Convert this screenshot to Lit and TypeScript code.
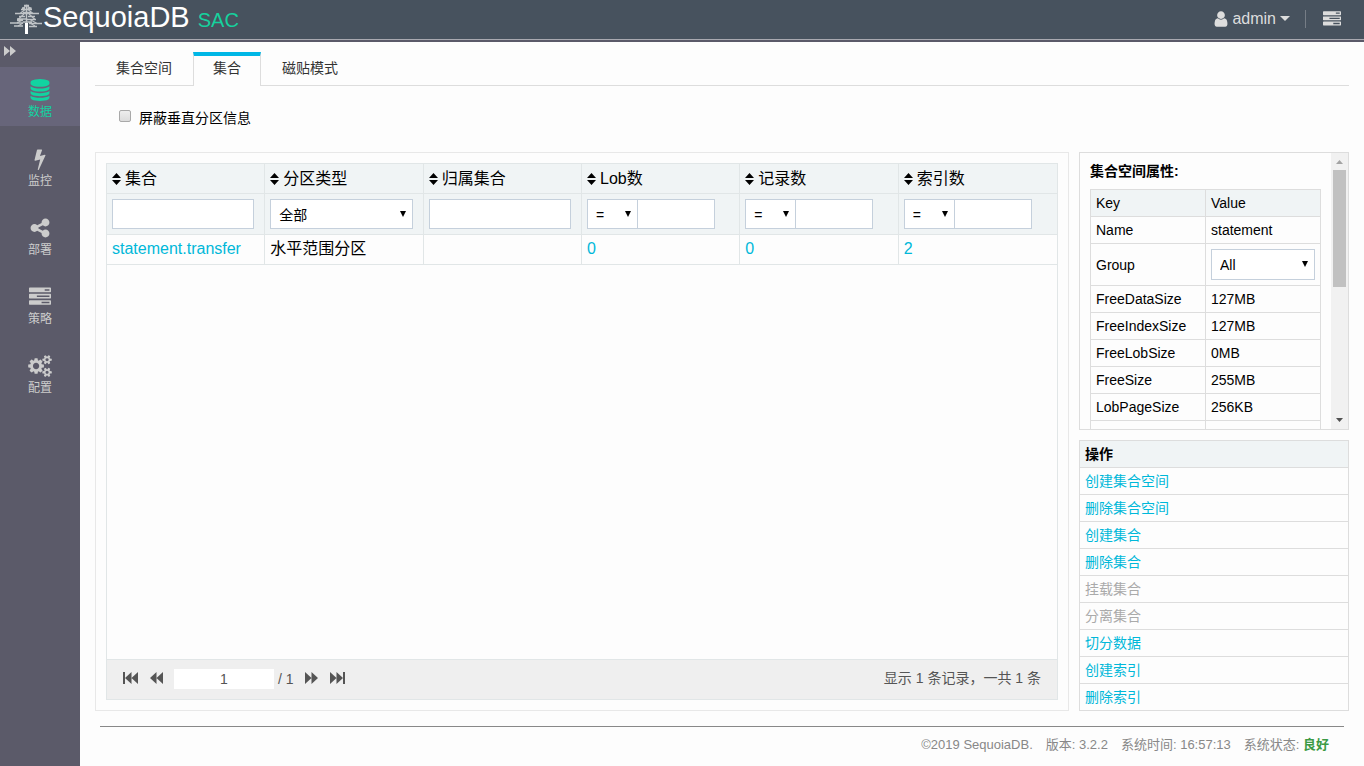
import { LitElement, html, css, svg, nothing } from "lit";
import { customElement, state } from "lit/decorators.js";

const ICONS: Record<string, string> = {
  user: "M1536 1399q0 109-62.5 187t-150.5 78h-854q-88 0-150.5-78t-62.5-187q0-85 8.5-160.5t31.5-152 58.5-131 94-89 134.5-34.5q131 128 313 128t313-128q76 0 134.5 34.5t94 89 58.5 131 31.5 152 8.5 160.5zm-256-887q0 159-112.5 271.5t-271.5 112.5-271.5-112.5-112.5-271.5 112.5-271.5 271.5-112.5 271.5 112.5 112.5 271.5z",
  database: "M896 768q237 0 443-43t325-127v170q0 69-103 128t-280 93.5-385 34.5-385-34.5-280-93.5-103-128v-170q119 84 325 127t443 43zm0 768q237 0 443-43t325-127v170q0 69-103 128t-280 93.5-385 34.5-385-34.5-280-93.5-103-128v-170q119 84 325 127t443 43zm0-384q237 0 443-43t325-127v170q0 69-103 128t-280 93.5-385 34.5-385-34.5-280-93.5-103-128v-170q119 84 325 127t443 43zm0-1152q208 0 385 34.5t280 93.5 103 128v128q0 69-103 128t-280 93.5-385 34.5-385-34.5-280-93.5-103-128v-128q0-69 103-128t280-93.5 385-34.5z",
  bolt: "M1333 566q18 20 7 44l-540 1157q-13 25-42 25-4 0-14-2-17-5-25.5-19t-4.5-30l197-808-406 101q-4 1-12 1-18 0-31-11-18-15-13-39l201-825q4-14 16-23t28-9h328q19 0 32 12.5t13 29.5q0 8-5 18l-171 463 396-98q8-2 12-2 19 0 34 15z",
  share: "M1344 1024q133 0 226.5 93.5t93.5 226.5-93.5 226.5-226.5 93.5-226.5-93.5-93.5-226.5q0-12 2-34l-360-180q-92 86-218 86-133 0-226.5-93.5t-93.5-226.5 93.5-226.5 226.5-93.5q126 0 218 86l360-180q-2-22-2-34 0-133 93.5-226.5t226.5-93.5 226.5 93.5 93.5 226.5-93.5 226.5-226.5 93.5q-126 0-218-86l-360 180q2 22 2 34t-2 34l360 180q92-86 218-86z",
  tasks: "M1024 1408h640v-128h-640v128zm-384-512h1024v-128h-1024v128zm640-512h384v-128h-384v128zm512 832v256q0 26-19 45t-45 19h-1664q-26 0-45-19t-19-45v-256q0-26 19-45t45-19h1664q26 0 45 19t19 45zm0-512v256q0 26-19 45t-45 19h-1664q-26 0-45-19t-19-45v-256q0-26 19-45t45-19h1664q26 0 45 19t19 45zm0-512v256q0 26-19 45t-45 19h-1664q-26 0-45-19t-19-45v-256q0-26 19-45t45-19h1664q26 0 45 19t19 45z",
  cogs: "M832 896q0-106-75-181t-181-75-181 75-75 181 75 181 181 75 181-75 75-181zm768 512q0-52-38-90t-90-38-90 38-38 90q0 53 37.5 90.5t90.5 37.5 90.5-37.5 37.5-90.5zm0-1024q0-52-38-90t-90-38-90 38-38 90q0 53 37.5 90.5t90.5 37.5 90.5-37.5 37.5-90.5zm-384 421v185q0 10-7 19.5t-16 10.5l-155 24q-11 35-32 76 34 48 90 115 7 11 7 20 0 12-7 19-23 30-82.5 89.5t-78.5 59.5q-11 0-21-7l-115-90q-37 19-77 31-11 108-23 155-7 24-30 24h-186q-11 0-20-7.5t-10-17.5l-23-153q-34-10-75-31l-118 89q-7 7-20 7-11 0-21-8-144-133-144-160 0-9 7-19 10-14 41-53t47-61q-23-44-35-82l-152-24q-10-1-17-9.5t-7-19.5v-185q0-10 7-19.5t16-10.5l155-24q11-35 32-76-34-48-90-115-7-11-7-20 0-12 7-20 22-30 82-89t79-59q11 0 21 7l115 90q34-18 77-32 11-108 23-154 7-24 30-24h186q11 0 20 7.5t10 17.5l23 153q34 10 75 31l118-89q8-7 20-7 11 0 21 8 144 133 144 160 0 8-7 19-12 16-42 54t-45 60q23 48 34 82l152 23q10 2 17 10.5t7 19.5zm640 533v140q0 16-149 31-12 27-30 52 51 113 51 138 0 4-4 7-122 71-124 71-8 0-46-47t-52-68q-20 2-30 2t-30-2q-14 21-52 68t-46 47q-2 0-124-71-4-3-4-7 0-25 51-138-18-25-30-52-149-15-149-31v-140q0-16 149-31 13-29 30-52-51-113-51-138 0-4 4-7 4-2 35-20t59-34 30-16q8 0 46 46.5t52 67.5q20-2 30-2t30 2q51-71 92-112l6-2q4 0 124 70 4 3 4 7 0 25-51 138 17 23 30 52 149 15 149 31zm0-1024v140q0 16-149 31-12 27-30 52 51 113 51 138 0 4-4 7-122 71-124 71-8 0-46-47t-52-68q-20 2-30 2t-30-2q-14 21-52 68t-46 47q-2 0-124-71-4-3-4-7 0-25 51-138-18-25-30-52-149-15-149-31v-140q0-16 149-31 13-29 30-52-51-113-51-138 0-4 4-7 4-2 35-20t59-34 30-16q8 0 46 46.5t52 67.5q20-2 30-2t30 2q51-71 92-112l6-2q4 0 124 70 4 3 4 7 0 25-51 138 17 23 30 52 149 15 149 31z",
};

const icon = (name: string, cls: string) =>
  html`<svg class=${cls} viewBox="0 0 1792 1792" aria-hidden="true">${svg`<path d=${ICONS[name]} fill="currentColor"></path>`}</svg>`;

const glyph = (w: number, h: number, d: string, cls = "") =>
  html`<svg class=${cls} width=${w} height=${h} viewBox="0 0 ${w} ${h}" aria-hidden="true">${svg`<path d=${d} fill="currentColor"></path>`}</svg>`;

const sortIcon = () => glyph(9, 12, "M4.5 0 9 5H0zM0 7h9L4.5 12z", "sort");
const downArrow = () => glyph(6, 6, "M0 0h6L3 6z", "arrow");

const NAV = [
  { icon: "database", label: "数据", active: true },
  { icon: "bolt", label: "监控" },
  { icon: "share", label: "部署" },
  { icon: "tasks", label: "策略" },
  { icon: "cogs", label: "配置" },
];

const COLUMNS = [
  { title: "集合", filter: "text" },
  { title: "分区类型", filter: "select" },
  { title: "归属集合", filter: "text" },
  { title: "Lob数", filter: "compare" },
  { title: "记录数", filter: "compare" },
  { title: "索引数", filter: "compare" },
];

const PROPS: { key: string; value?: string; options?: string[] }[] = [
  { key: "Name", value: "statement" },
  { key: "Group", options: ["All"] },
  { key: "FreeDataSize", value: "127MB" },
  { key: "FreeIndexSize", value: "127MB" },
  { key: "FreeLobSize", value: "0MB" },
  { key: "FreeSize", value: "255MB" },
  { key: "LobPageSize", value: "256KB" },
  { key: "", value: "" },
];

const ACTIONS = [
  { label: "创建集合空间" },
  { label: "删除集合空间" },
  { label: "创建集合" },
  { label: "删除集合" },
  { label: "挂载集合", disabled: true },
  { label: "分离集合", disabled: true },
  { label: "切分数据" },
  { label: "创建索引" },
  { label: "删除索引" },
];

@customElement("app-root")
export class AppRoot extends LitElement {
  @state() private page = "1";

  static styles = css`
    :host {
      display: flex;
      flex-direction: column;
      height: 100vh;
      min-height: 600px;
      box-sizing: border-box;
      font: 14px/20px "Liberation Sans", "Noto Sans CJK SC", sans-serif;
      color: #000;
      background: #fdfdfd;
    }
    *, *::before, *::after { box-sizing: border-box; }
    a { color: #00b8d9; text-decoration: none; }
    button, input, select {
      font: inherit;
      color: inherit;
      margin: 0;
      padding: 0;
      border: 0;
      border-radius: 0;
      background: none;
    }
    button { cursor: pointer; }
    svg { display: block; flex: none; }

    .top {
      display: flex;
      align-items: center;
      justify-content: space-between;
      height: 40px;
      padding: 0 23px 0 10px;
      background: #47525e;
      border-bottom: 1px solid #a9a9b0;
      color: #ddd;
      flex: none;
    }
    .brand { display: flex; align-items: baseline; line-height: 34px; padding-bottom: 2px; }
    .tree { align-self: center; margin-right: 1px; }
    .name { font-size: 29px; color: #fff; }
    .product { font-size: 20px; color: #16d19d; margin-left: 8px; }
    .tools { display: flex; align-items: center; font-size: 16px; padding-bottom: 2px; }
    .account { display: flex; align-items: center; gap: 2px; color: #ddd; }
    .icon18 { width: 18px; height: 18px; }
    .caret { margin-left: 2px; }
    .split { width: 1px; height: 18px; background: #767d86; margin: 0 17px 0 15px; }

    .body {
      display: flex;
      flex: 1;
      min-height: 0;
      border-top: 2px solid #5b5a69;
    }
    .side { width: 80px; flex: none; background: #5b5a69; color: #ccc; }
    .expand { display: flex; width: 80px; height: 25px; padding: 4px; color: #ccc; }
    .nav { display: flex; flex-direction: column; gap: 10px; }
    .item {
      display: flex;
      flex-direction: column;
      align-items: center;
      height: 59px;
      padding-top: 11px;
      gap: 1px;
      font-size: 12px;
      line-height: 18px;
      color: #ccc;
    }
    .item.active { background: #67657a; color: #12d3a1; }
    .icon22 { width: 22px; height: 24px; overflow: visible; }

    .main {
      flex: 1;
      min-width: 0;
      display: flex;
      flex-direction: column;
      padding: 10px 15px 0;
    }
    .tabs { display: flex; height: 34px; flex: none; }
    .tab {
      padding: 0 21px 2px;
      border-bottom: 1px solid #ddd;
      color: #333;
    }
    .tab.active {
      padding: 0 19px 6px;
      border: 1px solid #ddd;
      border-top: 4px solid #00b7e6;
      border-bottom: 0;
    }
    .rest { flex: 1; border-bottom: 1px solid #ddd; }
    .option { display: flex; align-items: center; height: 66px; padding: 0 0 2px 24px; flex: none; }
    .option label { display: flex; align-items: center; gap: 8px; }
    .check {
      appearance: none;
      width: 12px;
      height: 12px;
      border: 1px solid #a9a9a9;
      border-radius: 2px;
      background: linear-gradient(#eee, #dcdcdc);
      margin-bottom: 4px;
    }

    .panels { flex: 1; min-height: 0; display: flex; gap: 10px; }
    .grid-panel { flex: 1; min-width: 0; padding: 10px; border: 1px solid #e8e8e8; display: flex; }
    .grid { flex: 1; min-width: 0; border: 1px solid #e1e6e7; display: flex; flex-direction: column; }
    .fill { flex: 1; }
    table { border-collapse: separate; border-spacing: 0; width: 100%; table-layout: fixed; }
    .data { font-size: 16px; }
    .data th, .data td {
      font-weight: normal;
      text-align: left;
      padding: 0 5px;
      height: 30px;
      line-height: 29px;
      border-right: 1px solid #e1e6e7;
      border-bottom: 1px solid #e1e6e7;
      white-space: nowrap;
    }
    .data th:first-child { width: calc(100% / 6 + 1px); }
    .data th:last-child, .data td:last-child { border-right: 0; }
    .data thead { background: #f0f4f5; }
    .data tbody td { line-height: 28px; padding-bottom: 1px; }
    .data .filter { height: 41px; padding: 5px 10px 5px 5px; font-size: 14px; }
    .title { display: flex; align-items: center; gap: 4px; }
    .sort { margin-top: 1px; }
    .field {
      display: block;
      width: 100%;
      height: 30px;
      padding: 0 8px;
      border: 1px solid #c5d0dc;
      background: #fff;
    }
    .pick { position: relative; display: block; width: 100%; }
    .pick select {
      appearance: none;
      display: block;
      width: 100%;
      height: 30px;
      padding: 2px 8px 0;
      border: 1px solid #c5d0dc;
      background: #fff;
      line-height: 20px;
    }
    .arrow { position: absolute; right: 7px; top: 12px; pointer-events: none; }
    .compare { display: flex; width: 128px; }
    .compare .pick { width: 51px; flex: none; }
    .compare .field { flex: 1; min-width: 0; border-left: 0; }

    .pager {
      display: flex;
      align-items: center;
      height: 40px;
      padding: 0 16px 2px;
      background: #efefef;
      border-top: 1px solid #e1e6e7;
      color: #555;
    }
    .pager button { display: flex; padding-bottom: 2px; }
    .pager .back { margin: 0 11px 0 12px; }
    .page { width: 100px; height: 20px; background: #fff; text-align: center; }
    .total { margin: 0 11px 0 4px; }
    .pager .last { margin-left: 12px; }
    .summary { margin-left: auto; padding-bottom: 2px; }

    .right { width: 270px; flex: none; display: flex; flex-direction: column; gap: 10px; }
    .props { flex: 1; min-height: 0; display: flex; border: 1px solid #ddd; }
    .scroll { flex: 1; overflow-y: auto; scrollbar-width: none; padding: 8px 10px 0; }
    .heading { margin: 0 0 8px; font-size: 14px; line-height: 20px; font-weight: bold; }
    .kv { border-top: 1px solid #ddd; border-left: 1px solid #ddd; }
    .kv th, .kv td {
      font-weight: normal;
      text-align: left;
      height: 27px;
      line-height: 26px;
      padding: 0 5px;
      border-right: 1px solid #ddd;
      border-bottom: 1px solid #ddd;
      white-space: nowrap;
    }
    .kv thead th { background: #f0f4f5; }
    .kv .tall { height: 42px; }
    .kv select { height: 31px; padding-top: 0; }
    .bar { width: 17px; flex: none; background: #f1f1f1; display: flex; flex-direction: column; align-items: center; padding: 7px 0; }
    .thumb { width: 13px; height: 117px; margin-top: 6px; background: #c1c1c1; }
    .up { color: #a3a3a3; }
    .down { color: #505050; margin-top: auto; }

    .actions { border: 1px solid #ddd; flex: none; }
    .actions h2 { margin: 0; padding: 0 5px; font-size: 14px; line-height: 26px; background: #f0f4f5; }
    .actions ul { list-style: none; margin: 0; padding: 0; }
    .actions li { border-top: 1px solid #ddd; }
    .actions button { display: block; width: 100%; padding: 0 5px; line-height: 26px; text-align: left; color: #00b8d9; }
    .actions button:disabled { color: #aaa; cursor: default; }

    .foot {
      display: flex;
      justify-content: flex-end;
      gap: 13px;
      height: 40px;
      flex: none;
      margin: 15px 5px 0;
      padding: 8px 15px 0 0;
      border-top: 1px solid #888;
      font-size: 13px;
      color: #888;
    }
    .ok { color: #3c9a45; }
  `;

  private filter(c: { title: string; filter: string }) {
    if (c.filter === "text") return html`<input class="field" type="text" aria-label=${c.title} />`;
    if (c.filter === "select")
      return html`<span class="pick"><select aria-label=${c.title}><option>全部</option></select>${downArrow()}</span>`;
    return html`<div class="compare">
      <span class="pick"><select aria-label="${c.title}比较"><option>=</option></select>${downArrow()}</span>
      <input class="field" type="text" aria-label=${c.title} />
    </div>`;
  }

  render() {
    return html`
      <header class="top">
        <div class="brand">
          <svg class="tree" width="32" height="35" viewBox="0 0 32 35" fill="none" stroke="#bfc3c6" aria-hidden="true">
            <path d="M14 4.500h5M12 7h3M17.500 7h4M11 8.500h11M13 11.500h8M5 12.500h11M17 12.500h12M9 15.500h6M18 15.500h7M7 18h9M17 18.500h9M7 19.500h6M0 22h13M13 21h9M19 22.500h13M4 25h9M19 25.500h8" stroke-width="1.300"></path>
            <path d="M16.500 4l-4 4M16.500 4l5 4.500M15 8.500l-5 4M18 8.500l5 4M14 13l-6 5.500M19 13l6 5.500M13 18.500l-6 3.500M20 18.500l7 4M13 22l-5 3M20 22l5 3" stroke-width="1.100"></path>
            <path d="M16.500 5v17" stroke-width="1.500"></path>
            <path d="M16.500 22v11" stroke="#fff" stroke-width="3"></path>
          </svg>
          <span class="name">SequoiaDB</span><span class="product">SAC</span>
        </div>
        <div class="tools">
          <button class="account">${icon("user", "icon18")}<span>admin</span>${glyph(10, 5, "M0 0h10L5 5z", "caret")}</button>
          <span class="split"></span>
          <button aria-label="任务">${icon("tasks", "icon18")}</button>
        </div>
      </header>
      <div class="body">
        <aside class="side">
          <button class="expand" aria-label="展开">${glyph(12, 10, "M0 0l6 5V0l6 5-6 5V5l-6 5z")}</button>
          <nav class="nav">
            ${NAV.map((n) => html`<a class="item ${n.active ? "active" : ""}" href="#">
              ${icon(n.icon, "icon22")}<span>${n.label}</span></a>`)}
          </nav>
        </aside>
        <main class="main">
          <div class="tabs" role="tablist">
            <button class="tab" role="tab">集合空间</button>
            <button class="tab active" role="tab" aria-selected="true">集合</button>
            <button class="tab" role="tab">磁贴模式</button>
            <span class="rest"></span>
          </div>
          <div class="option">
            <label><input class="check" type="checkbox" /><span>屏蔽垂直分区信息</span></label>
          </div>
          <div class="panels">
            <section class="grid-panel">
              <div class="grid">
                <table class="data">
                  <thead>
                    <tr>${COLUMNS.map((c) => html`<th><span class="title">${sortIcon()}<span>${c.title}</span></span></th>`)}</tr>
                    <tr>${COLUMNS.map((c) => html`<td class="filter">${this.filter(c)}</td>`)}</tr>
                  </thead>
                  <tbody>
                    <tr>
                      <td><a href="#">statement.transfer</a></td>
                      <td>水平范围分区</td>
                      <td></td>
                      <td><a href="#">0</a></td>
                      <td><a href="#">0</a></td>
                      <td><a href="#">2</a></td>
                    </tr>
                  </tbody>
                </table>
                <div class="fill"></div>
                <div class="pager">
                  <button aria-label="首页">${glyph(15, 12, "M0 0h2v12H0zM8.500 0v12L2 6zM15 0v12L8.500 6z")}</button>
                  <button class="back" aria-label="上一页">${glyph(13, 12, "M6.500 0v12L0 6zM13 0v12L6.500 6z")}</button>
                  <input class="page" type="text" aria-label="页码" .value=${this.page}
                    @change=${(e: Event) => (this.page = (e.target as HTMLInputElement).value)} />
                  <span class="total">/ 1</span>
                  <button aria-label="下一页">${glyph(13, 12, "M0 0l6.500 6L0 12zM6.500 0 13 6 6.500 12z")}</button>
                  <button class="last" aria-label="末页">${glyph(15, 12, "M0 0l6.500 6L0 12zM6.500 0 13 6 6.500 12zM13 0h2v12h-2z")}</button>
                  <span class="summary">显示 1 条记录，一共 1 条</span>
                </div>
              </div>
            </section>
            <div class="right">
              <section class="props">
                <div class="scroll">
                  <h2 class="heading">集合空间属性:</h2>
                  <table class="kv">
                    <thead><tr><th>Key</th><th>Value</th></tr></thead>
                    <tbody>
                      ${PROPS.map((p) => html`<tr>
                        <td class=${p.options ? "tall" : nothing}>${p.key}</td>
                        <td>${p.options
                          ? html`<span class="pick"><select aria-label=${p.key}>${p.options.map((o) => html`<option>${o}</option>`)}</select>${downArrow()}</span>`
                          : p.value}</td>
                      </tr>`)}
                    </tbody>
                  </table>
                </div>
                <div class="bar" aria-hidden="true">
                  ${glyph(7, 4, "M0 4h7L3.500 0z", "up")}
                  <div class="thumb"></div>
                  ${glyph(7, 4, "M0 0h7L3.500 4z", "down")}
                </div>
              </section>
              <section class="actions">
                <h2>操作</h2>
                <ul>${ACTIONS.map((a) => html`<li><button ?disabled=${a.disabled}>${a.label}</button></li>`)}</ul>
              </section>
            </div>
          </div>
          <footer class="foot">
            <span>©2019 SequoiaDB.</span>
            <span>版本: 3.2.2</span>
            <span>系统时间: 16:57:13</span>
            <span>系统状态: <b class="ok">良好</b></span>
          </footer>
        </main>
      </div>
    `;
  }
}
